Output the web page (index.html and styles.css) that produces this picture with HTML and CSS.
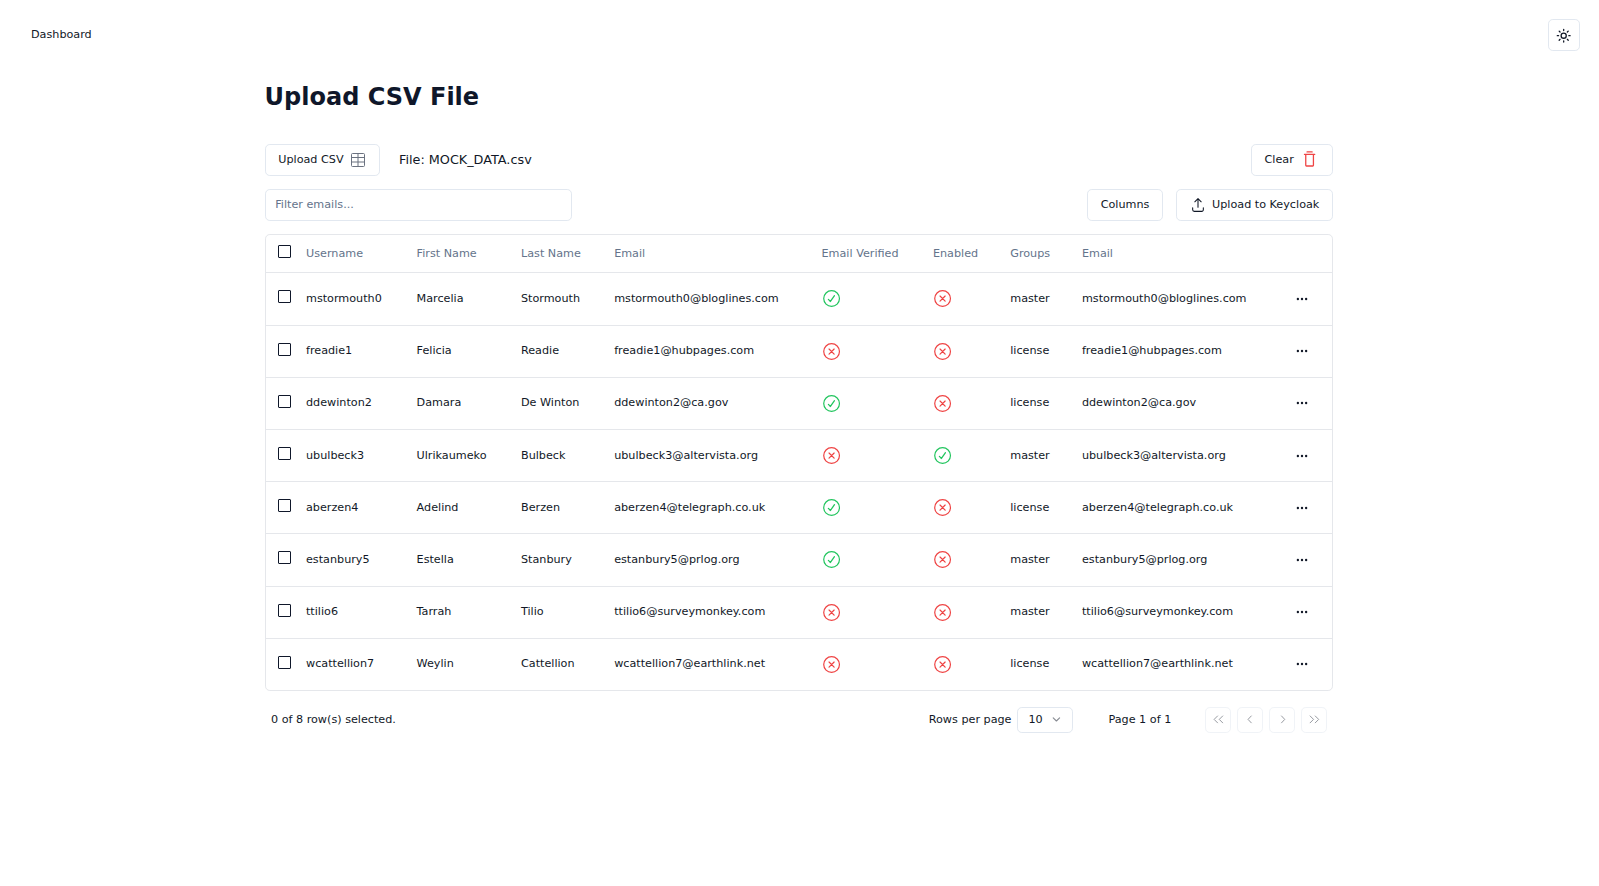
FILE: index.html
```html
<!DOCTYPE html>
<html lang="en">
<head>
<meta charset="utf-8">
<title>Upload CSV File</title>
<link rel="stylesheet" href="styles.css">
</head>
<body>
<svg width="0" height="0" class="sprite">
  <symbol id="check" viewBox="0 0 15 15"><g fill="none" stroke="currentColor" stroke-linecap="round" stroke-linejoin="round"><circle cx="7.5" cy="7.5" r="6.15" stroke-width=".95"/><path d="M9.75 5.25 6.58 9.75 5 8.14"/></g></symbol>
  <symbol id="cross" viewBox="0 0 15 15"><g fill="none" stroke="currentColor" stroke-linecap="round"><circle cx="7.5" cy="7.5" r="6.15" stroke-width=".95"/><path d="m5.5 5.5 4 4m0-4-4 4" stroke-width=".95"/></g></symbol>
  <symbol id="dots" viewBox="0 0 15 15"><g fill="currentColor"><circle cx="3.63" cy="7.5" r="1.1"/><circle cx="7.5" cy="7.5" r="1.1"/><circle cx="11.37" cy="7.5" r="1.1"/></g></symbol>
</svg>
<header class="topbar">
  <a class="nav-link">Dashboard</a>
  <button class="btn theme-btn" aria-label="Toggle theme"><svg class="sun" viewBox="0 0 24 24" fill="none" stroke="currentColor" stroke-width="2" stroke-linecap="round"><circle cx="12" cy="12" r="4"/><path d="M12 2v2M12 20v2M4.93 4.93l1.41 1.41M17.66 17.66l1.41 1.41M2 12h2M20 12h2M6.34 17.66l-1.41 1.41M19.07 4.93l-1.41 1.41"/></svg></button>
</header>
<main class="container">
  <h1 class="title">Upload CSV File</h1>
  <div class="toolbar">
    <div class="file-group">
      <button class="btn upload-btn">Upload CSV<svg class="icon-16 grid-icon" viewBox="0 0 16 16" fill="none" stroke="currentColor"><rect x="1.5" y="1.5" width="13" height="13" rx="1"/><path d="M8 1.5v13M1.5 5.5h13M1.5 10h13"/></svg></button>
      <span class="file-name">File: MOCK_DATA.csv</span>
    </div>
    <button class="btn clear-btn">Clear<svg class="icon-19 red" viewBox="0 0 15 15" fill="none" stroke="currentColor" stroke-linecap="round"><path d="M5.5 1.5h4M3.5 3.5h8M4.5 3.5V12a.5.5 0 0 0 .5.5h5a.5.5 0 0 0 .5-.5V3.5"/></svg></button>
  </div>
  <div class="toolbar">
    <input class="filter" placeholder="Filter emails...">
    <div class="actions">
      <button class="btn columns-btn">Columns</button>
      <button class="btn key-btn"><svg class="icon-16" viewBox="0 0 15 15" fill="none" stroke="currentColor" stroke-linecap="round" stroke-linejoin="round"><path d="M4.5 4.5l3-3 3 3M7.5 1.7v7.8M2.5 10v2a1.5 1.5 0 0 0 1.5 1.5h7a1.5 1.5 0 0 0 1.5-1.5v-2"/></svg>Upload to Keycloak</button>
    </div>
  </div>
  <div class="table-box">
    <table class="table">
      <colgroup><col class="c-check"><col class="c-user"><col class="c-first"><col class="c-last"><col class="c-email"><col class="c-verified"><col class="c-enabled"><col class="c-groups"><col class="c-email2"><col></colgroup>
      <thead><tr><th><span class="box"></span></th><th>Username</th><th>First Name</th><th>Last Name</th><th>Email</th><th>Email Verified</th><th>Enabled</th><th>Groups</th><th>Email</th><th></th></tr></thead>
      <tbody id="rows"></tbody>
    </table>
  </div>
  <footer class="footer">
    <span>0 of 8 row(s) selected.</span>
    <div class="paging">
      <span>Rows per page</span>
      <button class="select">10<svg viewBox="0 0 24 24" fill="none" stroke="currentColor" stroke-width="2" stroke-linecap="round" stroke-linejoin="round"><path d="m6 9 6 6 6-6"/></svg></button>
      <span class="page">Page 1 of 1</span>
      <div class="pager">
        <button><svg viewBox="0 0 15 15"><path d="m6.5 3.5-4 4 4 4M12.5 3.5l-4 4 4 4"/></svg></button>
        <button><svg viewBox="0 0 15 15"><path d="M8.5 3.5 4.75 7.5l3.75 4"/></svg></button>
        <button><svg viewBox="0 0 15 15"><path d="m6.5 3.5 3.75 4-3.75 4"/></svg></button>
        <button><svg viewBox="0 0 15 15"><path d="m2.5 3.5 4 4-4 4M8.5 3.5l4 4-4 4"/></svg></button>
      </div>
    </div>
  </footer>
</main>
<script src="rows.js"></script>
</body>
</html>
```

FILE: styles.css
```css
* { box-sizing: border-box; }
body { margin: 0; background: #fff; color: #111827; font: 11.2px/16px "DejaVu Sans", sans-serif; }
button, input { font: inherit; color: inherit; background: #fff; }
svg { display: block; flex: none; }
.sprite { position: absolute; }
.topbar { display: flex; justify-content: space-between; align-items: center; height: 70px; padding: 0 19px 0 31px; }
.btn { display: flex; align-items: center; justify-content: center; height: 32px; padding: 0 12.8px; border: 1px solid #e2e8f0; border-radius: 4.8px; white-space: nowrap; }
.theme-btn { width: 32px; padding: 0; }
.sun { width: 15.4px; height: 15.4px; margin-top: 1px; }
.container { width: 1068.4px; margin: 0 auto 0 264.6px; }
.title { margin: 11px 0 31px; font-size: 24px; line-height: 32px; font-weight: 700; color: #0f172a; }
.toolbar { display: flex; justify-content: space-between; align-items: center; height: 32px; margin-bottom: 13px; }
.file-group, .actions { display: flex; align-items: center; }
.file-name { margin-left: 19.4px; font-size: 12.8px; }
.upload-btn { width: 115px; }
.clear-btn { width: 82px; }
.icon-16 { width: 16px; height: 16px; }
.icon-19 { width: 19.2px; height: 19.2px; }
.grid-icon { margin-left: 6.4px; color: #6b7280; }
.red { margin-left: 6.4px; color: #ef4444; }
.actions { gap: 13px; }
.columns-btn { width: 76px; }
.key-btn { width: 157px; gap: 6.4px; }
.filter { width: 307px; height: 32px; padding: 0 9.6px 2px; border: 1px solid #e2e8f0; border-radius: 4.8px; }
.filter::placeholder { color: #64748b; opacity: 1; }
.table-box { border: 1px solid #e5e7eb; border-radius: 4.8px; height: 457px; overflow: hidden; }
.table { width: 100%; table-layout: fixed; border-collapse: separate; border-spacing: 0; }
.c-check { width: 27.6px; }
.c-user { width: 110.6px; }
.c-first { width: 104.4px; }
.c-last { width: 93.2px; }
.c-email { width: 207.4px; }
.c-verified { width: 111.4px; }
.c-enabled { width: 77.3px; }
.c-groups { width: 71.7px; }
.c-email2 { width: 206.5px; }
th, td { padding: 0 0 0 12.8px; text-align: left; font-weight: 400; vertical-align: middle; border-bottom: 1px solid #e5e7eb; white-space: nowrap; }
th { height: 38px; color: #64748b; }
td { height: 52px; }
tr:first-child td, tr:nth-child(6) td { height: 53px; }
tr:nth-child(2) td, tr:nth-child(3) td, tr:nth-child(7) td, tr:nth-child(8) td { padding-bottom: 1px; }
th:first-child, td:first-child { padding-left: 12.4px; }
.box { display: block; width: 13px; height: 13px; margin-top: -4px; border: 1px solid #0f172a; border-radius: 1px; }
tr:nth-child(1) td .box, tr:nth-child(6) .box { margin-top: -5px; }
tr:nth-child(2) .box, tr:nth-child(3) .box, tr:nth-child(7) .box, tr:nth-child(8) .box { margin-top: -3px; }
.status { width: 19.2px; height: 19.2px; margin-top: 1px; }
tr:nth-child(1) .status, tr:nth-child(6) .status { margin-top: 0; }
tr:nth-child(2) .status, tr:nth-child(3) .status, tr:nth-child(7) .status, tr:nth-child(8) .status { margin-top: 2px; }
.check { color: #22c55e; }
.cross { color: #ef4444; }
.more { width: 16px; height: 16px; margin: 0 0 0 5.4px; }
tr:nth-child(1) .more, tr:nth-child(6) .more { margin-top: -1px; }
.footer { display: flex; align-items: center; justify-content: space-between; padding: 15.5px 6px 15.5px 6.4px; }
.paging { display: flex; align-items: center; }
.select { display: flex; align-items: center; justify-content: space-between; width: 56px; height: 26px; margin-left: 6px; padding: 0 9.6px 0 10px; border: 1px solid #e2e8f0; border-radius: 4.8px; }
.select svg { width: 12.8px; height: 12.8px; opacity: .5; }
.page { margin-left: 35px; width: 96.5px; }
.pager { display: flex; gap: 6px; }
.pager button { display: flex; align-items: center; justify-content: center; width: 26px; height: 26px; padding: 0; border: 1px solid #e2e8f0; border-radius: 4.8px; opacity: .5; }
.pager svg { width: 12.8px; height: 12.8px; fill: none; stroke: currentColor; stroke-linecap: round; stroke-linejoin: round; }
```

FILE: rows.js
```js
const users = [
  ["mstormouth0", "Marcelia", "Stormouth", "mstormouth0@bloglines.com", true, false, "master"],
  ["freadie1", "Felicia", "Readie", "freadie1@hubpages.com", false, false, "license"],
  ["ddewinton2", "Damara", "De Winton", "ddewinton2@ca.gov", true, false, "license"],
  ["ubulbeck3", "Ulrikaumeko", "Bulbeck", "ubulbeck3@altervista.org", false, true, "master"],
  ["aberzen4", "Adelind", "Berzen", "aberzen4@telegraph.co.uk", true, false, "license"],
  ["estanbury5", "Estella", "Stanbury", "estanbury5@prlog.org", true, false, "master"],
  ["ttilio6", "Tarrah", "Tilio", "ttilio6@surveymonkey.com", false, false, "master"],
  ["wcattellion7", "Weylin", "Cattellion", "wcattellion7@earthlink.net", false, false, "license"]
];
const status = ok => {
  const name = ok ? "check" : "cross";
  return `<svg class="status ${name}"><use href="#${name}"/></svg>`;
};
document.getElementById("rows").innerHTML = users.map(([user, first, last, email, verified, enabled, group]) => {
  const cells = ['<span class="box"></span>', user, first, last, email, status(verified), status(enabled), group, email, '<svg class="more"><use href="#dots"/></svg>'];
  return `<tr>${cells.map(c => `<td>${c}</td>`).join("")}</tr>`;
}).join("");
```
